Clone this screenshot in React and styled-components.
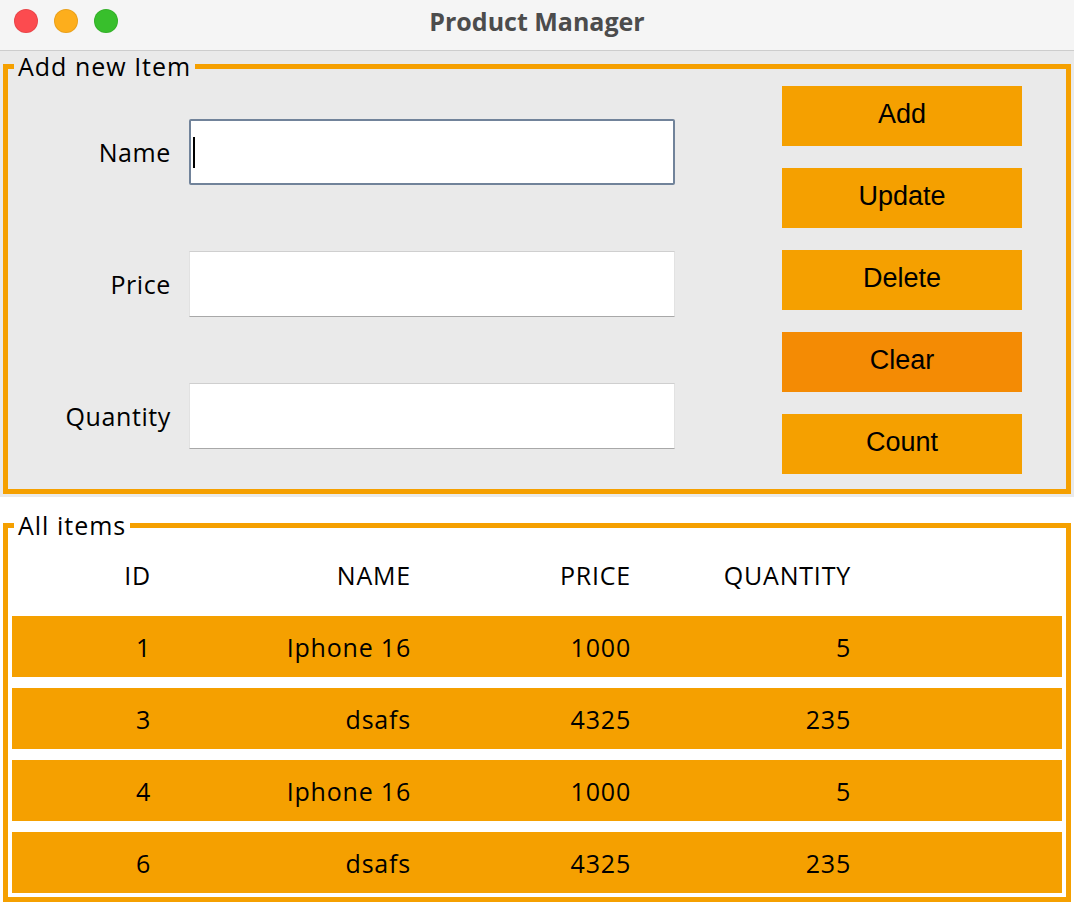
import styled, { createGlobalStyle } from 'styled-components';

const ORANGE = '#f5a000';

const GlobalStyle = createGlobalStyle`
  * {
    box-sizing: border-box;
  }
  body {
    margin: 0;
    background: #ffffff;
    font-family: 'Open Sans', 'Noto Sans', sans-serif;
  }
`;

const items = [
  { id: 1, name: 'Iphone 16', price: 1000, quantity: 5 },
  { id: 3, name: 'dsafs', price: 4325, quantity: 235 },
  { id: 4, name: 'Iphone 16', price: 1000, quantity: 5 },
  { id: 6, name: 'dsafs', price: 4325, quantity: 235 },
];

const fields = [
  { label: 'Name', focused: true },
  { label: 'Price' },
  { label: 'Quantity' },
];

const actions = ['Add', 'Update', 'Delete', 'Clear', 'Count'];

const App = () => {
  return (
    <Window>
      <GlobalStyle />
      <TitleBar>
        <Lights>
          <Light color="#fc4b4f" />
          <Light color="#fdae1c" />
          <Light color="#38bf2c" />
        </Lights>
        <Title>Product Manager</Title>
      </TitleBar>

      <TopPanel>
        <Group>
          <Legend>Add new Item</Legend>
          <FormLayout>
            <Form>
              {fields.map((f) => (
                <FormRow key={f.label}>
                  <Label>{f.label}</Label>
                  <Field>
                    <Input type="text" $focused={f.focused} />
                    {f.focused && <Caret />}
                  </Field>
                </FormRow>
              ))}
            </Form>
            <Buttons>
              {actions.map((a) => (
                <Button key={a} $active={a === 'Clear'}>
                  {a}
                </Button>
              ))}
            </Buttons>
          </FormLayout>
        </Group>
      </TopPanel>

      <BottomPanel>
        <Group>
          <Legend>All items</Legend>
          <Table>
            <Row>
              <Cell>ID</Cell>
              <Cell>NAME</Cell>
              <Cell>PRICE</Cell>
              <Cell>QUANTITY</Cell>
              <Cell />
            </Row>
            {items.map((it) => (
              <Row key={it.id} $filled>
                <Cell>{it.id}</Cell>
                <Cell>{it.name}</Cell>
                <Cell>{it.price}</Cell>
                <Cell>{it.quantity}</Cell>
                <Cell />
              </Row>
            ))}
          </Table>
        </Group>
      </BottomPanel>
    </Window>
  );
};

export default App;

const Window = styled.div`
  width: 1074px;
  height: 906px;
  display: flex;
  flex-direction: column;
  background: #ffffff;
  overflow: hidden;
`;

const TitleBar = styled.div`
  height: 51px;
  flex-shrink: 0;
  background: #f5f5f5;
  border-bottom: 1px solid #cdcdcd;
  display: flex;
  align-items: center;
  justify-content: center;
  position: relative;
`;

const Lights = styled.div`
  position: absolute;
  left: 14px;
  top: 9px;
  display: flex;
  gap: 16px;
`;

const Light = styled.span`
  width: 24px;
  height: 24px;
  border-radius: 50%;
  background: ${(p) => p.color};
  box-shadow: inset 0 0 0 1px rgba(0, 0, 0, 0.08);
`;

const Title = styled.div`
  font-family: 'Open Sans', sans-serif;
  font-weight: 700;
  font-size: 25px;
  color: #4c4c4c;
  margin-top: -9px;
`;

const TopPanel = styled.div`
  background: #eaeaea;
  padding: 0 3px 3px;
`;

const BottomPanel = styled.div`
  background: #ffffff;
  padding: 13px 3px 4px;
`;

const Group = styled.fieldset`
  margin: 0;
  padding: 0;
  min-width: 0;
  border: 5px solid ${ORANGE};
`;

const Legend = styled.legend`
  margin-left: 6px;
  padding: 0 4px;
  font-size: 25px;
  line-height: 30px;
  letter-spacing: 1px;
  color: #000000;
`;

const FormLayout = styled.div`
  display: flex;
  align-items: flex-start;
  padding: 5px 44px 15px 0;
`;

const Form = styled.div`
  flex: 1;
  height: 388px;
  display: grid;
  grid-template-rows: repeat(3, 132px);
  align-content: start;
`;

const FormRow = styled.div`
  display: grid;
  grid-template-columns: 163px 486px;
  column-gap: 18px;
  align-items: center;
`;

const Label = styled.label`
  text-align: right;
  font-size: 25px;
  letter-spacing: 0.6px;
  color: #000000;
`;

const Field = styled.div`
  position: relative;
  height: 66px;
`;

const Input = styled.input`
  width: 100%;
  height: 100%;
  margin: 0;
  outline: none;
  background: #ffffff;
  font-family: 'Open Sans', sans-serif;
  font-size: 25px;
  padding: 0 6px;
  border-radius: ${(p) => (p.$focused ? '2px' : '0')};
  border: ${(p) => (p.$focused ? '2px solid #71839a' : '1px solid #e2e2e2')};
  border-top-color: ${(p) => (p.$focused ? '#71839a' : '#cfcfcf')};
  border-bottom-color: ${(p) => (p.$focused ? '#71839a' : '#a8a8a8')};
`;

const Caret = styled.span`
  position: absolute;
  left: 4px;
  top: 18px;
  width: 2px;
  height: 31px;
  background: #000000;
`;

const Buttons = styled.div`
  display: flex;
  flex-direction: column;
  gap: 22px;
`;

const Button = styled.button`
  width: 240px;
  height: 60px;
  border: none;
  border-radius: 0;
  padding: 0 0 4px;
  background: ${(p) => (p.$active ? '#f48b04' : ORANGE)};
  color: #000000;
  font-family: 'Liberation Sans', Arial, sans-serif;
  font-size: 27px;
  cursor: pointer;
`;

const Table = styled.div`
  display: flex;
  flex-direction: column;
  gap: 11px;
  padding: 4px;
`;

const Row = styled.div`
  height: 61px;
  display: grid;
  grid-template-columns: 139px 260px 220px 220px 1fr;
  align-items: center;
  background: ${(p) => (p.$filled ? ORANGE : 'transparent')};
`;

const Cell = styled.div`
  text-align: right;
  font-size: 25px;
  letter-spacing: 0.8px;
  color: #000000;
`;
